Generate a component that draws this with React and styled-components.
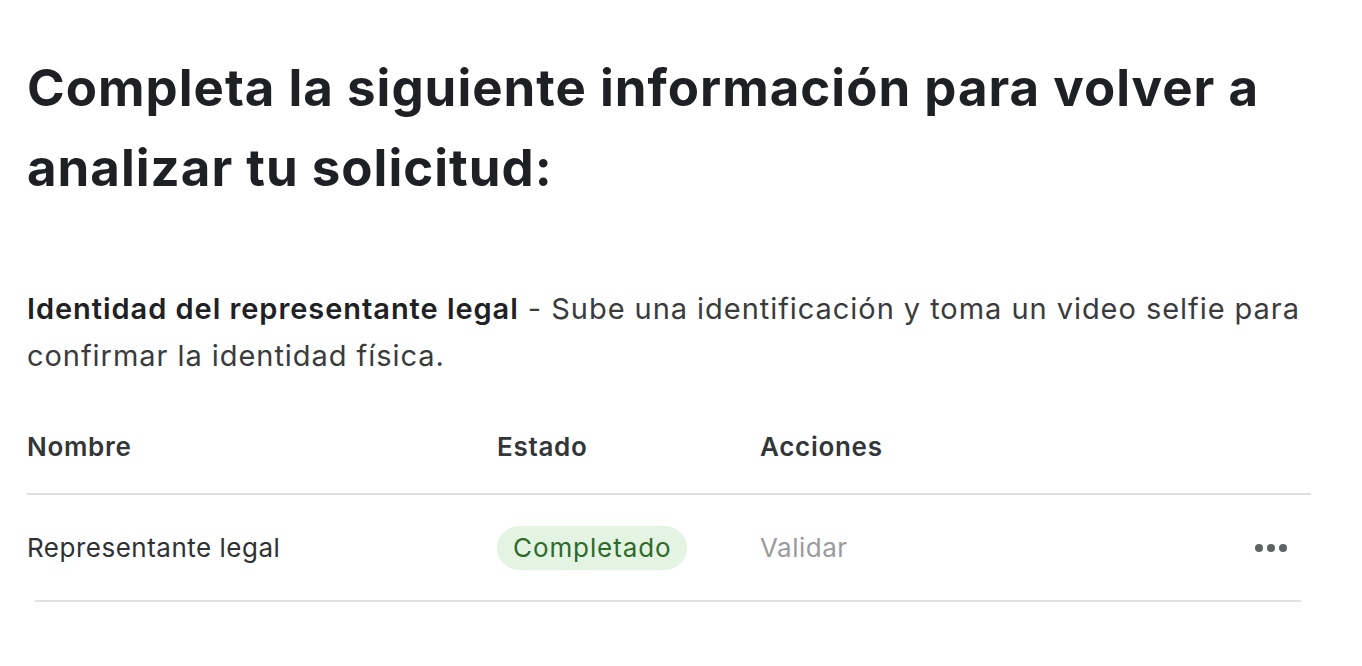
import React from 'react';
import styled, { createGlobalStyle } from 'styled-components';

const GlobalStyle = createGlobalStyle`
  html, body {
    margin: 0;
    padding: 0;
    background: #ffffff;
  }
  body {
    font-family: Inter, "Noto Sans", "Liberation Sans", sans-serif;
    color: #202124;
  }
`;

const Page = styled.div`
  padding: 48px 52px 0 27px;
`;

const Title = styled.h1`
  margin: 0;
  font-size: 51px;
  line-height: 80px;
  font-weight: 700;
  letter-spacing: 1px;
  color: #1f2023;
  max-width: 1270px;
`;

const Description = styled.p`
  margin: 77px 0 0;
  font-size: 29px;
  line-height: 47px;
  font-weight: 400;
  letter-spacing: 0.95px;
  color: #3a3b3d;

  strong {
    font-weight: 600;
    color: #202124;
  }
`;

const Table = styled.div`
  margin-top: 42px;
  width: 1284px;
`;

const HeadRow = styled.div`
  display: grid;
  grid-template-columns: 470px 263px 1fr;
  align-items: center;
  padding: 10px 0 30px;
  line-height: 32px;
  border-bottom: 2px solid #dcdfe0;
`;

const HeadCell = styled.div`
  font-size: 26px;
  font-weight: 600;
  letter-spacing: 0.7px;
  color: #333638;
`;

const BodyRow = styled.div`
  display: grid;
  grid-template-columns: 470px 263px 1fr auto;
  align-items: center;
  height: 105px;
`;

const Cell = styled.div`
  font-size: 26px;
  font-weight: 400;
  letter-spacing: 0.5px;
  color: ${p => (p.$muted ? '#9a9b9d' : '#2f3133')};
`;

const Badge = styled.span`
  display: inline-flex;
  align-items: center;
  height: 44px;
  padding: 0 16px;
  border-radius: 22px;
  background: #e4f4e2;
  color: #2f6a2b;
  font-size: 26px;
  letter-spacing: 0.9px;
`;

const MoreButton = styled.button`
  display: flex;
  gap: 4px;
  align-items: center;
  padding: 0;
  margin-right: 24px;
  border: none;
  background: none;
  cursor: pointer;
`;

const Dot = styled.span`
  width: 8px;
  height: 8px;
  border-radius: 50%;
  background: #5f6263;
`;

const RowDivider = styled.div`
  height: 2px;
  margin: 0 10px 0 8px;
  background: #dfe2e3;
`;

export default function App() {
  return (
    <>
      <GlobalStyle />
      <Page>
        <Title>Completa la siguiente información para volver a analizar tu solicitud:</Title>
        <Description>
          <strong>Identidad del representante legal</strong>
          <span> - Sube una identificación y toma un video selfie para confirmar la identidad física.</span>
        </Description>
        <Table>
          <HeadRow>
            <HeadCell>Nombre</HeadCell>
            <HeadCell>Estado</HeadCell>
            <HeadCell>Acciones</HeadCell>
          </HeadRow>
          <BodyRow>
            <Cell>Representante legal</Cell>
            <Cell><Badge>Completado</Badge></Cell>
            <Cell $muted>Validar</Cell>
            <MoreButton aria-label="Más opciones">
              <Dot /><Dot /><Dot />
            </MoreButton>
          </BodyRow>
          <RowDivider />
        </Table>
      </Page>
    </>
  );
}
